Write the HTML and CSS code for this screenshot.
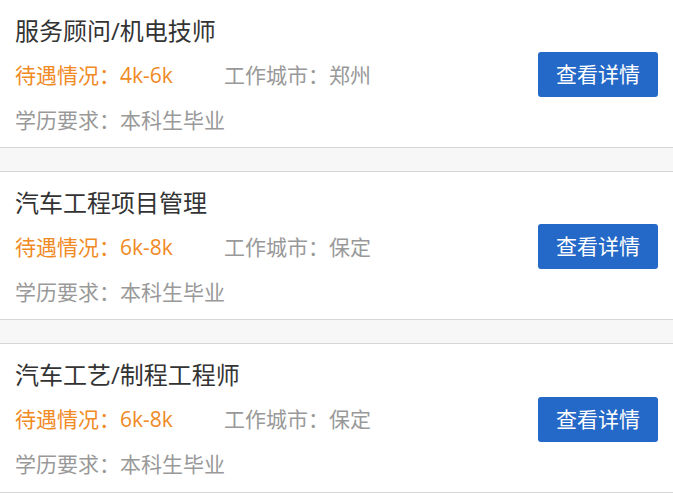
FILE: index.html
```html
<!DOCTYPE html>
<html lang="zh-CN">
<head>
    <meta charset="UTF-8">
    <title>招聘职位</title>
    <meta name="viewport" content="width=device-width, initial-scale=1">
    <link rel="stylesheet" href="styles.css">
</head>
<body>

<main class="job-list">
    <section class="job">
        <div class="job-info">
            <h2 class="job-title">服务顾问/机电技师</h2>
            <div class="job-meta">
                <span class="salary">待遇情况：4k-6k</span>
                <span class="city">工作城市：郑州</span>
            </div>
            <div class="job-edu">学历要求：本科生毕业</div>
        </div>
        <a class="detail-btn" href="#">查看详情</a>
    </section>

    <section class="job">
        <div class="job-info">
            <h2 class="job-title">汽车工程项目管理</h2>
            <div class="job-meta">
                <span class="salary">待遇情况：6k-8k</span>
                <span class="city">工作城市：保定</span>
            </div>
            <div class="job-edu">学历要求：本科生毕业</div>
        </div>
        <a class="detail-btn" href="#">查看详情</a>
    </section>

    <section class="job">
        <div class="job-info">
            <h2 class="job-title">汽车工艺/制程工程师</h2>
            <div class="job-meta">
                <span class="salary">待遇情况：6k-8k</span>
                <span class="city">工作城市：保定</span>
            </div>
            <div class="job-edu">学历要求：本科生毕业</div>
        </div>
        <a class="detail-btn" href="#">查看详情</a>
    </section>
</main>

</body>
</html>
```

FILE: styles.css
```css
body {
    font-family: "Open Sans", "Noto Sans CJK SC", sans-serif;
    background-color: #f7f7f7;
    color: #333;
    margin: 0;
    padding: 0;
}
.job-list {
    display: flex;
    flex-direction: column;
    gap: 23px;
}
.job {
    background-color: #fff;
    border-top: 1px solid #d6d6d6;
    border-bottom: 1px solid #d6d6d6;
    height: 147px;
    padding: 0 15px;
    display: flex;
    justify-content: space-between;
    align-items: center;
}
.job:first-child {
    border-top: none;
}
.job:last-child {
    height: 148px;
}
.job-info {
    align-self: stretch;
    padding-top: 15px;
}
.job-title {
    margin: 0;
    font-size: 24px;
    font-weight: normal;
    line-height: 32px;
    color: #333;
}
.job-meta {
    display: flex;
    margin-top: 13px;
    font-size: 21px;
    line-height: 30px;
}
.salary {
    width: 209px;
    color: #f08a24;
}
.city {
    color: #999;
}
.job-edu {
    margin-top: 15px;
    font-size: 21px;
    line-height: 30px;
    color: #999;
}
.detail-btn {
    margin-top: 2px;
    width: 120px;
    height: 45px;
    line-height: 45px;
    text-align: center;
    background-color: #2468c8;
    color: #fff;
    font-size: 21px;
    text-decoration: none;
    border-radius: 3px;
}
```
